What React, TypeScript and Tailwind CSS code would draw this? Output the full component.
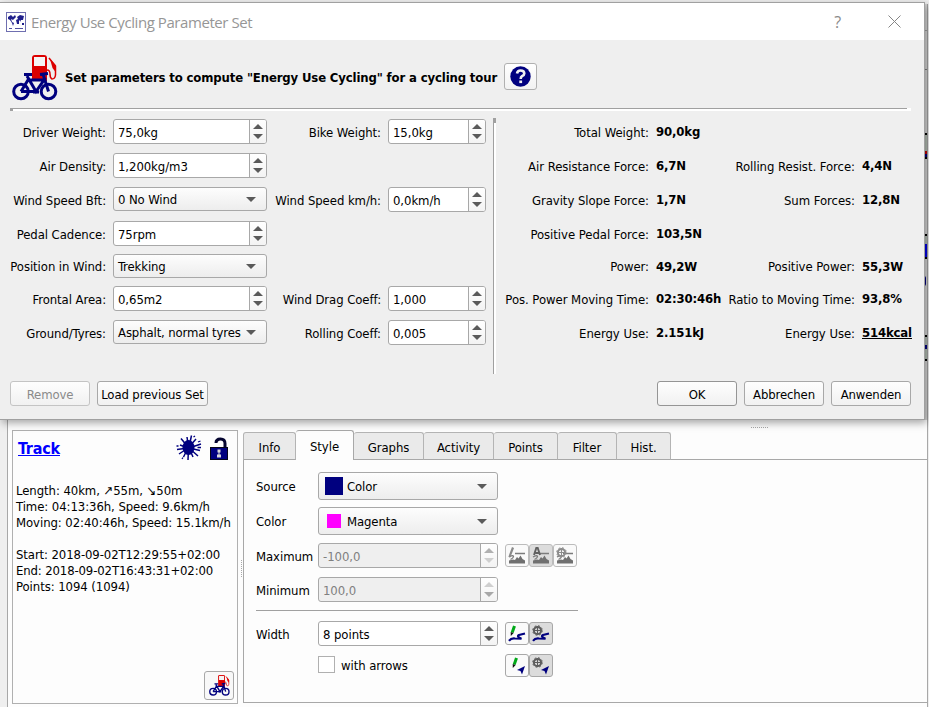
import React from "react";

const UI = "font-['DejaVu_Sans_Condensed','DejaVu_Sans',sans-serif]";

function Arrow({ up = false, color = "#5a5a5a" }: { up?: boolean; color?: string }) {
  return (
    <svg width="10" height="5" viewBox="0 0 10 5" className="block">
      <path d={up ? "M0 5 L5 0 L10 5 Z" : "M0 0 L5 5 L10 0 Z"} fill={color} />
    </svg>
  );
}

type SpinProps = { value: string; className: string; disabled?: boolean; up?: string; down?: string };

function Spin({ value, className, disabled = false, up, down }: SpinProps) {
  return (
    <div
      className={`flex h-[25px] overflow-hidden rounded-[3px] border border-[#a8a8a8] ${
        disabled ? "bg-[#efefef] text-[#808080]" : "bg-white"
      } ${className}`}
    >
      <div className="flex flex-1 items-center pt-[2px] pl-[4px]">{value}</div>
      <div className="flex w-[17px] flex-col items-center justify-between border-l border-[#a8a8a8] bg-gradient-to-b from-white to-[#f3f3f3] py-[4px] pr-px">
        <Arrow up color={up} />
        <Arrow color={down} />
      </div>
    </div>
  );
}

function Combo({ value, className, swatch }: { value: string; className: string; swatch?: React.ReactNode }) {
  return (
    <div
      className={`flex items-center rounded-[3px] border border-[#a8a8a8] bg-gradient-to-b from-[#fdfdfd] to-[#ededed] pl-[4px] pr-[10px] tracking-[-0.12px] whitespace-nowrap ${className}`}
    >
      {swatch}
      <span className="flex-1 pt-px">{value}</span>
      <Arrow />
    </div>
  );
}

function Btn({ children, className }: { children: React.ReactNode; className: string }) {
  return (
    <div
      className={`flex h-[25px] items-center justify-center rounded-[3px] border bg-gradient-to-b from-[#fefefe] to-[#f1f1f1] pt-[2px] ${className}`}
    >
      {children}
    </div>
  );
}

function PumpBike({ size }: { size: number }) {
  return (
    <svg width={size} height={size} viewBox="0 0 46 46" fill="none">
      <path d="M20 26 V3 Q20 0 23 0 H32 Q35 0 35 3 V26 Z" fill="#dc0000" />
      <rect x="22" y="2" width="11" height="9" fill="#f4f4f4" />
      <path d="M37 3 L43.500 11 V20 Q43 24 40 24 Q38 23 38 19 Q38 15 35 15" stroke="#dc0000" strokeWidth="1.500" />
      <path d="M38 4 L43.500 10 V17 L40.500 13 Z" fill="#dc0000" />
      <g stroke="#00007f" strokeWidth="3">
        <circle cx="9" cy="36.500" r="7.300" />
        <circle cx="36.500" cy="36.500" r="7.300" />
        <path d="M9 36.500 L16 25 H32 L24 36.500 L15 21 M24 36.500 H9 M36.500 36.500 L31 19 M12 19.500 H20 M28 19.500 L36 18.500 M21 37 H27" />
      </g>
    </svg>
  );
}

function MapIcon() {
  return (
    <svg width="20" height="20" viewBox="0 0 20 20">
      <rect x="0.500" y="0.500" width="19" height="19" fill="#fff" stroke="#6f6fb0" />
      <path
        d="M2 5 L5 3 L7 5 L9 3 L10 5 L8 7 L7 8 L5 7 L6 10 L8 11 L7 14 L6 11 L4 8 L2 7 Z M11 5 L14 3 L18 4 L17 8 L15 8 L15 10 L14 8 L13 9 L13 12 L11 12 L10 8 L12 7 Z M16 11 H18 V13 H16 Z"
        fill="#20208c"
      />
      <path d="M3 16.500 H6 M9 16.500 H17" stroke="#5050a0" />
    </svg>
  );
}

function Splat() {
  return (
    <svg width="26" height="26" viewBox="0 0 26 26" fill="none">
      <ellipse cx="12.500" cy="12.500" rx="6" ry="7.500" fill="#00007f" />
      <path
        d="M12.500 12 L11 2 M13 12 L15.500 0.500 M13 12 L20 4 M13 13 L25 9 M13 13 L24 15.500 M13 13 L22 21 M13 13 L17 22 M12.500 13 L12 25 M12 13 L7.500 22 M12 13 L3 19 M12 13 L1 14.500 M12 13 L4 10 M12 12 L5 3.500"
        stroke="#00007f"
        strokeWidth="1.500"
      />
      <path d="M22 7 L24.500 6 M0.500 11 H2.500 M21.500 12.500 H25 M17.500 2 L19 1 M6 24 L7 22.500" stroke="#00007f" strokeWidth="1.300" />
    </svg>
  );
}

function OpenLock() {
  return (
    <svg width="18" height="23" viewBox="0 0 18 23" fill="none">
      <path d="M6 6 Q6 2 10.500 2 Q15 2 15 6.500 V11" stroke="#050530" strokeWidth="3" />
      <rect x="0.500" y="10.500" width="17" height="12" fill="#00007f" stroke="#050518" />
      <path d="M7.500 12.500 h3 v3 h-1 v2 h1.500 v3 h-4 v-3 h1.500 v-2 h-1 z" fill="#d8d8d8" />
    </svg>
  );
}

type ToolKind = "edit" | "auto" | "gear";

function ToolButton({ pressed = false, muted = false, children }: { pressed?: boolean; muted?: boolean; children: React.ReactNode }) {
  return (
    <div
      className={`flex h-[23px] w-[24px] items-center justify-center rounded-[3px] border ${
        muted ? "border-[#bcbcbc]" : "border-[#a8a8a8]"
      } ${pressed ? "bg-[#dcdcdc]" : "bg-[#fafafa]"}`}
    >
      {children}
    </div>
  );
}

function GearShape({ color }: { color: string }) {
  return (
    <g stroke={color} fill="none">
      <circle cx="5.500" cy="5.500" r="3.600" strokeWidth="2" />
      <circle cx="5.500" cy="5.500" r="4.800" strokeWidth="1" strokeDasharray="1.900 1.870" />
      <path d="M5.500 1 V10 M1 5.500 H10" strokeWidth="1.100" />
    </g>
  );
}

function TerrainIcon({ kind }: { kind: ToolKind }) {
  return (
    <svg width="18" height="18" viewBox="0 0 18 18" fill="none">
      <path d="M1 13.500 L5 12.500 L7 13 L9 10 L10.500 11.500 L12.500 8.500 L14.500 12 L17 13.500 V16.500 H1 Z" fill="#707070" />
      <path d="M1 10 Q5 7.500 5.500 9.500 Q5.500 11 2.500 12.500 M7 6.500 H17" stroke="#7c7c7c" strokeWidth="1.300" />
      {kind === "edit" && <path d="M5 0.500 L2.500 7 L1.500 10" stroke="#8a8a8a" strokeWidth="2.200" />}
      {kind === "auto" && <path d="M2 8 L4.300 1 H5.700 L8 8 M3.500 6 H7" stroke="#606060" strokeWidth="1.900" />}
      {kind === "gear" && <GearShape color="#8c8c8c" />}
    </svg>
  );
}

function PenIcon({ kind, arrow = false }: { kind: ToolKind; arrow?: boolean }) {
  const pen = arrow ? "translate(2 0)" : "";
  return (
    <svg width="18" height="18" viewBox="0 0 18 18" fill="none">
      {kind === "edit" ? (
        <g transform={pen}>
          <path d="M6.500 1 L4.200 7.500" stroke="#00a818" strokeWidth="3" />
          <path d="M2.700 7 L5.600 8 L2.800 11 Z" fill="#111" />
        </g>
      ) : (
        <GearShape color="#5c5c5c" />
      )}
      {arrow ? (
        <path d="M17 9 L14 17.500 L12.500 14 L9 13 Z" fill="#00007f" />
      ) : (
        <path d="M1 15.800 Q3 13 7 13.500 L13.500 13.800 Q8 11.500 11 10 L17 8.500" stroke="#00007f" strokeWidth="2.100" />
      )}
    </svg>
  );
}

const ROWS = "grid-rows-[34px_34px_34px_33px_32px_34px_26px]";

function Label({ children, className = "" }: { children: React.ReactNode; className?: string }) {
  return (
    <div className={`-mr-px flex h-[28px] items-center justify-self-end whitespace-nowrap ${className}`}>{children}</div>
  );
}

function Value({ children }: { children: React.ReactNode }) {
  return <div className="flex h-[26px] items-center pl-[8px] font-bold tracking-[-0.15px] whitespace-nowrap">{children}</div>;
}

function Dialog() {
  return (
    <div className="absolute top-[2px] left-0 flex h-[418px] w-[925px] flex-col border-t border-r border-b border-[#a0a0a0] bg-[#efefef] shadow-[2px_3px_8px_rgba(0,0,0,0.35)]">
      <div className="flex h-[37px] items-center bg-white pl-[6px]">
        <MapIcon />
        <span className="ml-[5px] flex-1 font-['Open_Sans',sans-serif] text-[15px] tracking-[-0.43px] text-[#969696]">
          Energy Use Cycling Parameter Set
        </span>
        <span className="mr-[47px] font-['Open_Sans',sans-serif] text-[16px] text-[#8a8a8a]">?</span>
        <svg width="13" height="13" viewBox="0 0 13 13" className="mr-[23px]">
          <path d="M0.500 0.500 L12.500 12.500 M12.500 0.500 L0.500 12.500" stroke="#858585" />
        </svg>
      </div>
      <div className="flex h-[68px] items-start pl-[12px]">
        <div className="mt-[15px]">
          <PumpBike size={46} />
        </div>
        <span className="mt-[30px] ml-[7px] w-[433px] font-bold tracking-[-0.14px] whitespace-nowrap">
          Set parameters to compute "Energy Use Cycling" for a cycling tour
        </span>
        <div className="mt-[23px] ml-[6px] flex h-[27px] w-[33px] items-center justify-center rounded-[3px] border border-[#b0b0b0] bg-gradient-to-b from-white to-[#f2f2f2]">
          <svg width="21" height="21" viewBox="0 0 21 21" fill="none" className="-mt-px -ml-px">
            <circle cx="10.500" cy="10.500" r="10.200" fill="#00007f" />
            <path d="M7 7.500 Q7.500 4.500 10.500 4.500 Q14.300 4.500 14.300 7.500 Q14.300 9 12 10.200 Q10.700 11 10.700 13" stroke="#f0f0f0" strokeWidth="2.600" />
            <rect x="9.300" y="14.500" width="2.800" height="2.600" fill="#f0f0f0" />
          </svg>
        </div>
      </div>
      <div className="ml-[10px] h-[3px] w-[901px] bg-white">
        <div className="h-px w-[897px] bg-[#a0a0a0]" />
        <div className="h-[2px] w-[3px] bg-[#a0a0a0]" />
      </div>
      <div className="mt-[7px] flex h-[257px] pl-[10px]">
        <div className={`mt-px grid grid-cols-[95px_154px_105px_98px] ${ROWS} gap-x-[8px] items-start`}>
          <Label>Driver Weight:</Label>
          <Spin value="75,0kg" className="w-[154px]" />
          <Label>Bike Weight:</Label>
          <Spin value="15,0kg" className="w-[98px]" />
          <Label>Air Density:</Label>
          <Spin value="1,200kg/m3" className="col-span-3 w-[154px]" />
          <Label>Wind Speed Bft:</Label>
          <Combo value="0 No Wind" className="h-[24px] w-[154px]" />
          <Label>Wind Speed km/h:</Label>
          <Spin value="0,0km/h" className="w-[98px]" />
          <Label>Pedal Cadence:</Label>
          <Spin value="75rpm" className="col-span-3 w-[154px]" />
          <Label className="-mt-px">Position in Wind:</Label>
          <Combo value="Trekking" className="col-span-3 h-[24px] w-[154px]" />
          <Label>Frontal Area:</Label>
          <Spin value="0,65m2" className="w-[154px]" />
          <Label>Wind Drag Coeff:</Label>
          <Spin value="1,000" className="w-[98px]" />
          <Label>Ground/Tyres:</Label>
          <Combo value="Asphalt, normal tyres" className="h-[24px] w-[154px]" />
          <Label>Rolling Coeff:</Label>
          <Spin value="0,005" className="w-[98px]" />
        </div>
        <div className="ml-[7px] h-[256px] w-[3px] border-l border-[#a0a0a0] bg-white">
          <div className="h-[5px] w-[2px] bg-[#a0a0a0]" />
        </div>
        <div className={`mt-px ml-[6px] grid grid-cols-[146px_72px_134px_60px] ${ROWS} items-start tracking-[-0.05px]`}>
          <Label>Total Weight:</Label>
          <div className="col-span-3"><Value>90,0kg</Value></div>
          <Label>Air Resistance Force:</Label>
          <Value>6,7N</Value>
          <Label>Rolling Resist. Force:</Label>
          <Value>4,4N</Value>
          <Label>Gravity Slope Force:</Label>
          <Value>1,7N</Value>
          <Label>Sum Forces:</Label>
          <Value>12,8N</Value>
          <Label>Positive Pedal Force:</Label>
          <div className="col-span-3"><Value>103,5N</Value></div>
          <Label className="-mt-px">Power:</Label>
          <Value>49,2W</Value>
          <Label className="-mt-px">Positive Power:</Label>
          <Value>55,3W</Value>
          <Label>Pos. Power Moving Time:</Label>
          <Value>02:30:46h</Value>
          <Label>Ratio to Moving Time:</Label>
          <Value>93,8%</Value>
          <Label>Energy Use:</Label>
          <Value>2.151kJ</Value>
          <Label>Energy Use:</Label>
          <Value><span className="underline">514kcal</span></Value>
        </div>
      </div>
      <div className="mt-[6px] flex gap-[7px] pl-[10px] tracking-[-0.12px] whitespace-nowrap">
        <Btn className="w-[80px] border-[#c4c4c4] text-[#8a8a8a]">Remove</Btn>
        <Btn className="w-[111px] border-[#a8a8a8]">Load previous Set</Btn>
        <Btn className="ml-[442px] w-[80px] border-[#959595]">OK</Btn>
        <Btn className="w-[80px] border-[#a8a8a8]">Abbrechen</Btn>
        <Btn className="w-[80px] border-[#a8a8a8]">Anwenden</Btn>
      </div>
    </div>
  );
}

function Tab({ children, className }: { children: React.ReactNode; className: string }) {
  return (
    <div
      className={`flex h-[28px] items-center justify-center rounded-t-[3px] border-t border-r border-b border-t-[#b4b4b4] border-r-[#b4b4b4] border-b-[#a8a8a8] bg-[#eaeaea] pt-[3px] ${className}`}
    >
      {children}
    </div>
  );
}

function TrackPanel() {
  return (
    <div className="mt-[10px] ml-[4px] flex h-[274px] w-[226px] flex-col border border-[#b0b0b0] bg-[#fdfdfd] pl-[3px]">
      <div className="flex h-[52px] items-start pl-[2px]">
        <span className="mt-[8px] flex-1 text-[16px] leading-[20px] font-bold tracking-[-0.2px] text-[#0000ff] underline">Track</span>
        <div className="mt-[4px] mr-[8px]"><Splat /></div>
        <div className="mt-[6px] mr-[9px]"><OpenLock /></div>
      </div>
      <div className="leading-[16px] whitespace-pre">
        <div>Length: 40km, ↗55m, ↘50m</div>
        <div>Time: 04:13:36h, Speed: 9.6km/h</div>
        <div>Moving: 02:40:46h, Speed: 15.1km/h</div>
        <div className="mt-[16px] tracking-[-0.1px]">Start: 2018-09-02T12:29:55+02:00</div>
        <div className="tracking-[-0.13px]">End: 2018-09-02T16:43:31+02:00</div>
        <div>Points: 1094 (1094)</div>
      </div>
      <div className="mt-auto mr-[3px] mb-[3px] flex h-[29px] w-[30px] items-center justify-center self-end rounded-[3px] border border-[#a8a8a8] bg-[#f8f8f8]">
        <PumpBike size={21} />
      </div>
    </div>
  );
}

function StylePane() {
  return (
    <div className="flex h-[243px] flex-col border-b border-l border-[#a8a8a8] bg-[#fdfdfd] pl-[12px]">
      <div className="mt-[12px] flex h-[28px] items-center">
        <span className="w-[62px] pt-px">Source</span>
        <Combo
          value="Color"
          className="h-[28px] w-[180px]"
          swatch={<span className="mr-[4px] ml-[2px] h-[18px] w-[18px] bg-[#00007f]" />}
        />
      </div>
      <div className="mt-[7px] flex h-[28px] items-center">
        <span className="w-[62px] pt-px">Color</span>
        <Combo
          value="Magenta"
          className="h-[28px] w-[180px]"
          swatch={<span className="mr-[6px] ml-[4px] h-[14px] w-[14px] bg-[#ff00ff]" />}
        />
      </div>
      <div className="mt-[8px] flex h-[25px] items-center">
        <span className="w-[62px] pt-[2px]">Maximum</span>
        <Spin value="-100,0" className="w-[180px]" disabled up="#b0b0b0" down="#cfcfcf" />
        <div className="ml-[7px] flex">
          <ToolButton muted><TerrainIcon kind="edit" /></ToolButton>
          <ToolButton muted pressed><TerrainIcon kind="auto" /></ToolButton>
          <ToolButton muted><TerrainIcon kind="gear" /></ToolButton>
        </div>
      </div>
      <div className="mt-[9px] flex h-[25px] items-center">
        <span className="w-[62px] pt-[2px]">Minimum</span>
        <Spin value="100,0" className="w-[180px]" disabled up="#cfcfcf" down="#a8a8a8" />
      </div>
      <div className="mt-[8px] h-px w-[322px] shrink-0 bg-[#a0a0a0]" />
      <div className="mt-[10px] flex h-[25px] items-center">
        <span className="w-[62px] pt-[2px]">Width</span>
        <Spin value="8 points" className="w-[180px]" />
        <div className="ml-[7px] flex">
          <ToolButton><PenIcon kind="edit" /></ToolButton>
          <ToolButton pressed><PenIcon kind="gear" /></ToolButton>
        </div>
      </div>
      <div className="mt-[7px] flex h-[25px] items-center pl-[62px]">
        <span className="-mt-[2px] h-[17px] w-[17px] border border-[#b0b0b0] bg-white" />
        <span className="w-[163px] pt-[1px] pl-[6px]">with arrows</span>
        <div className="ml-[7px] flex">
          <ToolButton><PenIcon kind="edit" arrow /></ToolButton>
          <ToolButton pressed><PenIcon kind="gear" arrow /></ToolButton>
        </div>
      </div>
    </div>
  );
}

/* Sliver of the toolbar icons that stays visible beside the dialog. */
function ToolbarEdge() {
  return (
    <div className="flex h-[416px] w-[4px] flex-col border-r border-[#a0a0a0] bg-[#d6d6d6]">
      <div className="h-[27px] border-b border-[#a0a0a0]" />
      <div className="h-[39px] border-b border-[#808080]" />
      <div className="mt-[63px] h-[2px] bg-black" />
      <div className="h-[16px] bg-[#b3beb3]" />
      <div className="h-[3px] bg-[#c00000]" />
      <div className="h-[3px] bg-[#00007f]" />
      <div className="h-[2px] bg-black" />
      <div className="mt-[75px] h-[2px] bg-black" />
      <div className="h-[8px] bg-[#b3beb3]" />
      <div className="h-[13px] bg-[#0000e8]" />
      <div className="h-[2px] bg-black" />
      <div className="mt-[17px] h-[10px] w-[2px] rounded-r-full bg-[#00007f]" />
      <div className="mt-[49px] h-[2px] bg-black" />
      <div className="h-[8px] bg-[#b3beb3]" />
      <div className="h-[4px] bg-[#00007f]" />
      <div className="h-[10px] bg-[#b3beb3]" />
      <div className="h-[2px] bg-black" />
    </div>
  );
}

export default function App() {
  return (
    <div className={`relative h-[707px] w-[929px] overflow-hidden bg-[#efefef] ${UI} text-[13px] leading-[16px] tracking-[-0.07px] text-black`}>
      <div className="flex h-full flex-col">
        <div className="flex h-[420px] shrink-0 items-end justify-end pr-px">
          <ToolbarEdge />
        </div>
        <div className="ml-[7px] flex w-[921px] flex-1 border-r border-l border-[#a8a8a8] bg-[#fdfdfd]">
          <TrackPanel />
          <div className="flex w-[5px] items-start justify-end pt-[140px] pr-px">
            <div className="h-[17px] border-l border-dotted border-[#a8a8a8]" />
          </div>
          <div className="flex flex-1 flex-col">
            <div className="flex h-[10px] justify-end pt-[7px] pr-[159px]">
              <div className="w-[17px] border-t border-dotted border-[#a8a8a8]" />
            </div>
            <div className="flex h-[30px] items-end">
              <Tab className="w-[53px] border-l border-l-[#b4b4b4]">Info</Tab>
              <div className="flex h-[30px] w-[58px] items-center justify-center rounded-t-[3px] border-t border-r border-[#a8a8a8] bg-[#fdfdfd] pt-[3px]">Style</div>
              <Tab className="w-[70px]">Graphs</Tab>
              <Tab className="w-[70px]">Activity</Tab>
              <Tab className="w-[64px]">Points</Tab>
              <Tab className="w-[59px]">Filter</Tab>
              <Tab className="w-[54px]">Hist.</Tab>
              <div className="h-px flex-1 bg-[#a8a8a8]" />
            </div>
            <StylePane />
          </div>
        </div>
      </div>
      <Dialog />
    </div>
  );
}
